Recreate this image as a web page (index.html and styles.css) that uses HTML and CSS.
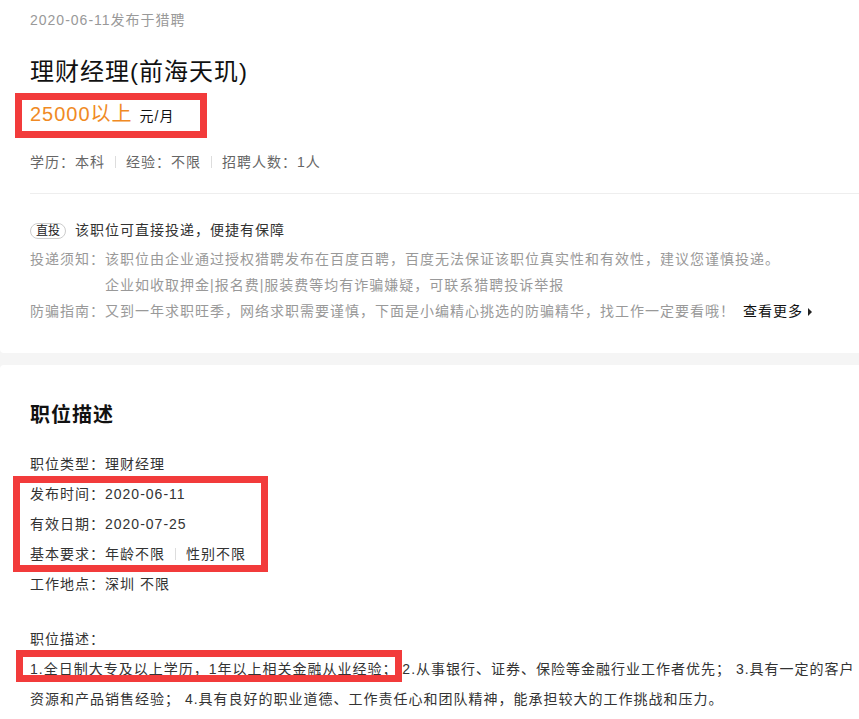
FILE: index.html
```html
<!DOCTYPE html>
<html lang="zh-CN">
  <head>
    <meta charset="UTF-8" />
    <meta name="viewport" content="width=device-width, initial-scale=1.0" />
    <title>理财经理(前海天玑)</title>
    <link rel="stylesheet" href="styles.css">
  </head>
  <body>

    <div class="card job-head">
      <p class="pub-date">2020-06-11发布于猎聘</p>
      <h1 class="job-title">理财经理(前海天玑)</h1>
      <div class="salary mark">
        <span class="salary-num">25000以上</span>
        <span class="salary-unit">元/月</span>
      </div>
      <p class="job-meta"><span>学历：本科</span><span>经验：不限</span><span>招聘人数：1人</span></p>

      <div class="delivery">
        <p class="direct">
          <span class="badge">直投</span>
          该职位可直接投递，便捷有保障
        </p>
        <div class="notice">
          <span class="notice-label">投递须知：</span>
          <div class="notice-text">
            <p>该职位由企业通过授权猎聘发布在百度百聘，百度无法保证该职位真实性和有效性，建议您谨慎投递。</p>
            <p>企业如收取押金|报名费|服装费等均有诈骗嫌疑，可联系猎聘投诉举报</p>
          </div>
        </div>
        <div class="notice">
          <span class="notice-label">防骗指南：</span>
          <div class="notice-text">
            <p>又到一年求职旺季，网络求职需要谨慎，下面是小编精心挑选的防骗精华，找工作一定要看哦！<a class="more" href="#">查看更多</a></p>
          </div>
        </div>
      </div>
    </div>

    <div class="card job-desc">
      <h2 class="section-title">职位描述</h2>
      <div class="fields">
        <p>职位类型：理财经理</p>
        <div class="mark field-mark">
          <p>发布时间：2020-06-11</p>
          <p>有效日期：2020-07-25</p>
          <p class="split"><span>基本要求：年龄不限</span><span>性别不限</span></p>
        </div>
        <p>工作地点：深圳 不限</p>
      </div>

      <p class="desc-label">职位描述：</p>
      <p class="desc-text"><span class="mark-inline">1.全日制大专及以上学历，1年以上相关金融从业经验；</span> 2.从事银行、证券、保险等金融行业工作者优先； 3.具有一定的客户资源和产品销售经验； 4.具有良好的职业道德、工作责任心和团队精神，能承担较大的工作挑战和压力。</p>
    </div>

  </body>
</html>
```

FILE: styles.css
```css
/* job detail page - top info card and description card */
body {
  margin: 0;
  background-color: #f5f5f5;
  font-family: "Liberation Sans", "Noto Sans CJK JP", sans-serif;
  font-size: 14px;
  letter-spacing: 1px;
  color: #333;
  overflow-x: hidden;
}

p {
  margin: 0;
}

.card {
  background-color: #fff;
  border-radius: 4px;
  margin-right: -8px;
  padding-left: 30px;
}

.job-head {
  margin-top: -10px;
  padding-top: 20px;
  padding-bottom: 29px;
}

.pub-date {
  line-height: 20px;
  color: #999;
}

.job-title {
  margin: 25px 0 0;
  font-size: 24px;
  font-weight: normal;
  line-height: 34px;
  color: #111;
}

/* red highlight frames */
.mark {
  outline: 7px solid #f23b3b;
  box-sizing: border-box;
}

.salary {
  margin-top: 11px;
  margin-left: -8px;
  padding-left: 8px;
  width: 178px;
  line-height: 29px;
}

.salary-num {
  font-size: 20px;
  color: #f08a24;
}

.salary-unit {
  margin-left: 2px;
  color: #111;
}

.job-meta {
  margin-top: 21px;
  line-height: 20px;
  color: #666;
}

.job-meta span + span::before,
.split span + span::before {
  content: "";
  display: inline-block;
  width: 1px;
  height: 12px;
  background-color: #ddd;
  margin: 0 10px;
  vertical-align: -1px;
}

.delivery {
  margin-top: 21px;
  padding-top: 23px;
  border-top: 1px solid #eee;
  line-height: 26px;
}

.direct {
  color: #333;
  margin-bottom: 3px;
}

.badge {
  display: inline-block;
  font-size: 12px;
  line-height: 14px;
  padding: 0 5px;
  border: 1px solid #ccc;
  border-radius: 8px;
  margin-right: 4px;
  letter-spacing: 0;
  color: #222;
}

.notice {
  display: flex;
  color: #999;
}

.notice-label {
  flex-shrink: 0;
}

.more {
  margin-left: 8px;
  color: #111;
  text-decoration: none;
}

.more::after {
  content: "";
  display: inline-block;
  margin-left: 5px;
  border-left: 4px solid #222;
  border-top: 4px solid transparent;
  border-bottom: 4px solid transparent;
  vertical-align: 0;
}

.job-desc {
  margin-top: 12px;
  padding-top: 36px;
  padding-bottom: 40px;
}

.section-title {
  margin: 0;
  font-size: 20px;
  line-height: 28px;
  color: #111;
}

.fields {
  margin-top: 20px;
  line-height: 30px;
}

.field-mark {
  outline-offset: -4px;
  margin-left: -14px;
  padding-left: 14px;
  width: 249px;
}

.desc-label {
  margin-top: 25px;
  line-height: 30px;
}

.desc-text {
  line-height: 30px;
}

.mark-inline {
  outline: 7px solid #f23b3b;
  outline-offset: -2px;
  padding-top: 6px;
  padding-left: 9px;
  margin-left: -9px;
}
```
